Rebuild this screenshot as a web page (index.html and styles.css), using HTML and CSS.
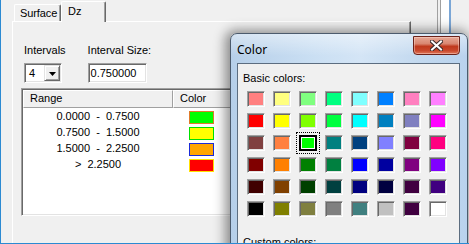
FILE: index.html
```html
<!DOCTYPE html>
<html>
<head>
<meta charset="utf-8">
<link rel="stylesheet" href="styles.css">
</head>
<body>
<div class="screen">
  <div class="main">
    <div class="tabs">
      <div class="tab">Surface</div>
      <div class="tab active">Dz</div>
    </div>
    <div class="panel">
      <div class="fields">
        <div class="field f1">
          <div class="lbl">Intervals</div>
          <div class="combo"><span class="val">4</span><span class="dd"><svg width="7" height="4" viewBox="0 0 7 4"><path d="M0 0h7L3.5 4z" fill="#000"/></svg></span></div>
        </div>
        <div class="field f2">
          <div class="lbl">Interval Size:</div>
          <div class="edit">0.750000</div>
        </div>
      </div>
      <div class="list">
        <div class="lhead">
          <div class="hc range">Range</div>
          <div class="hc color">Color</div>
          <div class="hc rest"></div>
        </div>
        <div class="row"><div class="rc">0.0000  -  0.7500</div><div class="cc"><span class="sw s1"></span></div></div>
        <div class="row"><div class="rc">0.7500  -  1.5000</div><div class="cc"><span class="sw s2"></span></div></div>
        <div class="row"><div class="rc">1.5000  -  2.2500</div><div class="cc"><span class="sw s3"></span></div></div>
        <div class="row"><div class="rc">&gt;  2.2500</div><div class="cc"><span class="sw s4"></span></div></div>
      </div>
    </div>
  </div>
  <div class="rframe">
    <div class="rl l1"></div>
    <div class="rl l2"></div>
    <div class="rl l3"></div>
    <div class="rl l4"></div>
  </div>

  <div class="dialog">
    <div class="titlebar">
      <span class="title">Color</span>
      <div class="close"><svg width="13" height="11" viewBox="0 0 13 11"><path d="M2 1.5L11 9.5M11 1.5L2 9.5" stroke="#3a2a2a" stroke-width="4" stroke-linecap="square"/><path d="M2 1.5L11 9.5M11 1.5L2 9.5" stroke="#fff" stroke-width="2" stroke-linecap="square"/></svg></div>
    </div>
    <div class="client">
      <div class="dlbl">Basic colors:</div>
      <div class="grid">
        <span class="cs" style="background:#ff8080"></span>
        <span class="cs" style="background:#ffff80"></span>
        <span class="cs" style="background:#80ff80"></span>
        <span class="cs" style="background:#00ff80"></span>
        <span class="cs" style="background:#80ffff"></span>
        <span class="cs" style="background:#0080ff"></span>
        <span class="cs" style="background:#ff80c0"></span>
        <span class="cs" style="background:#ff80ff"></span>

        <span class="cs" style="background:#ff0000"></span>
        <span class="cs" style="background:#ffff00"></span>
        <span class="cs" style="background:#80ff00"></span>
        <span class="cs" style="background:#00ff40"></span>
        <span class="cs" style="background:#00ffff"></span>
        <span class="cs" style="background:#0080c0"></span>
        <span class="cs" style="background:#8080c0"></span>
        <span class="cs" style="background:#ff00ff"></span>

        <span class="cs" style="background:#804040"></span>
        <span class="cs" style="background:#ff8040"></span>
        <span class="cs sel" style="background:#00ff00"></span>
        <span class="cs" style="background:#008080"></span>
        <span class="cs" style="background:#004080"></span>
        <span class="cs" style="background:#8080ff"></span>
        <span class="cs" style="background:#800040"></span>
        <span class="cs" style="background:#ff0080"></span>

        <span class="cs" style="background:#800000"></span>
        <span class="cs" style="background:#ff8000"></span>
        <span class="cs" style="background:#008000"></span>
        <span class="cs" style="background:#008040"></span>
        <span class="cs" style="background:#0000ff"></span>
        <span class="cs" style="background:#0000a0"></span>
        <span class="cs" style="background:#800080"></span>
        <span class="cs" style="background:#8000ff"></span>

        <span class="cs" style="background:#400000"></span>
        <span class="cs" style="background:#804000"></span>
        <span class="cs" style="background:#004000"></span>
        <span class="cs" style="background:#004040"></span>
        <span class="cs" style="background:#000080"></span>
        <span class="cs" style="background:#000040"></span>
        <span class="cs" style="background:#400040"></span>
        <span class="cs" style="background:#400080"></span>

        <span class="cs" style="background:#000000"></span>
        <span class="cs" style="background:#808000"></span>
        <span class="cs" style="background:#808040"></span>
        <span class="cs" style="background:#808080"></span>
        <span class="cs" style="background:#408080"></span>
        <span class="cs" style="background:#c0c0c0"></span>
        <span class="cs" style="background:#400040"></span>
        <span class="cs" style="background:#ffffff"></span>
      </div>
      <div class="dlbl custom">Custom colors:</div>
    </div>
  </div>
</div>
</body>
</html>
```

FILE: styles.css
```css
* { box-sizing: border-box; }
html, body { margin: 0; padding: 0; }
body {
  width: 469px;
  height: 244px;
  overflow: hidden;
  background: #f0f0f0;
  font-family: "Liberation Sans", Arial, sans-serif;
  font-size: 11px;
  color: #000;
}
.screen {
  position: relative;
  width: 469px;
  height: 244px;
  display: flex;
  padding-left: 1px;
  overflow: hidden;
}
.screen::after {
  content: "";
  position: absolute;
  left: 0; top: 0; right: 0; bottom: 0;
  border-left: 1px solid #2b8ad2;
  border-bottom: 1px solid #2b8ad2;
  pointer-events: none;
  z-index: 10;
}
.main {
  width: 436px;
  display: flex;
  flex-direction: column;
  flex: none;
}
.tabs {
  display: flex;
  align-items: flex-end;
  height: 21px;
  padding-left: 13px;
}
.tab {
  height: 17px;
  width: 47px;
  padding: 2px 0 0 5px;
  line-height: 13px;
  border-top: 1px solid #fff;
  border-left: 1px solid #fff;
  border-right: 1px solid #696969;
  box-shadow: inset -1px 0 #a0a0a0;
  border-radius: 2px 2px 0 0;
  white-space: nowrap;
  letter-spacing: -0.1px;
}
.tab.active {
  position: relative;
  z-index: 1;
  height: 21px;
  width: 45px;
  margin-bottom: -1px;
  padding: 3px 0 0 6px;
  background: #f0f0f0;
  letter-spacing: 0;
}
.panel {
  margin-left: 11px;
  width: 399px;
  flex: 1;
  border-top: 1px solid #fff;
  border-left: 1px solid #fff;
  border-right: 1px solid #696969;
  box-shadow: inset -1px 0 #a0a0a0;
  padding-left: 8px;
}
.fields {
  display: flex;
  gap: 22px;
  padding: 22px 0 0 3px;
}
.lbl {
  line-height: 13px;
  height: 13px;
  white-space: nowrap;
}
.combo, .edit {
  margin-top: 6px;
  height: 20px;
  background: #fff;
  border-style: solid;
  border-width: 1px;
  border-color: #a0a0a0 #fff #fff #a0a0a0;
  box-shadow: inset 1px 1px #696969, inset -1px -1px #e3e3e3;
}
.combo {
  width: 38px;
  display: flex;
  align-items: stretch;
  padding: 1px;
}
.combo .val {
  flex: 1;
  padding-left: 3px;
  line-height: 16px;
}
.dd {
  width: 16px;
  background: #f0f0f0;
  border-style: solid;
  border-width: 1px;
  border-color: #e3e3e3 #696969 #696969 #e3e3e3;
  box-shadow: inset 1px 1px #fff, inset -1px -1px #a0a0a0;
  display: flex;
  align-items: center;
  justify-content: center;
}
.dd svg { display: block; margin-top: 1px; }
.edit {
  width: 59px;
  padding: 2px 0 0 2px;
  line-height: 14px;
}
.list {
  margin-top: 5px;
  width: 379px;
  height: 128px;
  background: #fff;
  border-style: solid;
  border-width: 1px;
  border-color: #a0a0a0 #fff #fff #a0a0a0;
  box-shadow: inset 1px 1px #696969, inset -1px -1px #e3e3e3;
  padding: 1px;
}
.lhead {
  display: flex;
  height: 18px;
}
.hc {
  height: 18px;
  background: #f0f0f0;
  border-top: 1px solid #fff;
  border-left: 1px solid #fff;
  border-bottom: 1px solid #a0a0a0;
  border-right: 1px solid #a0a0a0;
  padding: 1px 0 0 6px;
  line-height: 13px;
}
.hc.range { width: 150px; }
.hc.color { width: 60px; }
.hc.rest { flex: 1; border-right: none; }
.row {
  display: flex;
  height: 16px;
  line-height: 16px;
}
.rc {
  width: 150px;
  text-align: center;
  white-space: pre;
}
.cc {
  padding: 3px 0 0 16px;
}
.sw {
  display: block;
  width: 25px;
  height: 13px;
  border: 1px solid;
}
.s1 { background: #00ff00; border-color: #e07a2c; }
.s2 { background: #ffff00; border-color: #00e000; }
.s3 { background: #ffa500; border-color: #1a2ad8; }
.s4 { background: #ff0000; border-color: #ffe000; }

.rframe {
  display: flex;
  flex: none;
}
.rl { height: 244px; }
.l1 { width: 1px; background: #a0a0a0; }
.l2 { width: 3px; background: #f0f0f0; border-right: 1px solid #a0a0a0; }
.l3 { width: 8px; background: #fff; }
.l4 { width: 2px; background: #7aa6d6; }

/* dialog */
.dialog {
  position: absolute;
  left: 230px;
  top: 33px;
  width: 238px;
  height: 230px;
  border: 1px solid #4c5b6d;
  border-radius: 7px 7px 0 0;
  background:
    linear-gradient(180deg, rgba(255,255,255,0.45) 0, rgba(255,255,255,0) 22px),
    linear-gradient(90deg, #b6cfe9 0, #cadff3 35%, #d4e5f6 55%, #c3d9ef 80%, #b9d3ee 100%);
  box-shadow: -2px 0 12px 3px rgba(0,0,0,0.42);
  z-index: 5;
}
.titlebar {
  position: relative;
  height: 29px;
  padding: 9px 0 0 6px;
}
.title {
  font-family: "Noto Sans", "Open Sans", sans-serif;
  font-size: 12px;
  line-height: 13px;
  color: #000;
}
.close {
  position: absolute;
  left: 182px;
  top: 2px;
  width: 47px;
  height: 19px;
  border: 1px solid #6c2219;
  border-radius: 0 0 4px 4px;
  background: linear-gradient(180deg, #e7a896 0, #d98670 40%, #c0391d 55%, #c9482c 80%, #e0775a 100%);
  box-shadow: inset 0 0 0 1px rgba(255,220,210,0.45);
  display: flex;
  align-items: center;
  justify-content: center;
}
.close svg { display: block; }
.client {
  margin: 0 7px 0 6px;
  height: 200px;
  background: #f0f0f0;
  border: 1px solid #5c6d80;
  padding: 8px 0 0 5px;
}
.dlbl {
  line-height: 13px;
  height: 13px;
  white-space: nowrap;
}
.grid {
  margin: 6px 0 0 4px;
  display: grid;
  grid-template-columns: repeat(8, 18px);
  grid-auto-rows: 16px;
  column-gap: 8px;
  row-gap: 6px;
}
.cs {
  display: block;
  position: relative;
  border-style: solid;
  border-width: 1px;
  border-color: #a0a0a0 #fff #fff #a0a0a0;
  box-shadow: inset 1px 1px #696969, inset -1px -1px #e3e3e3;
}
.cs.sel {
  border: 2px solid #000;
  box-shadow: inset 0 0 0 1px #fff;
}
.cs.sel::after {
  content: "";
  position: absolute;
  left: -5px; top: -5px; right: -5px; bottom: -5px;
  border: 1px dotted #000;
}
.dlbl.custom { margin-top: 19px; }
```
